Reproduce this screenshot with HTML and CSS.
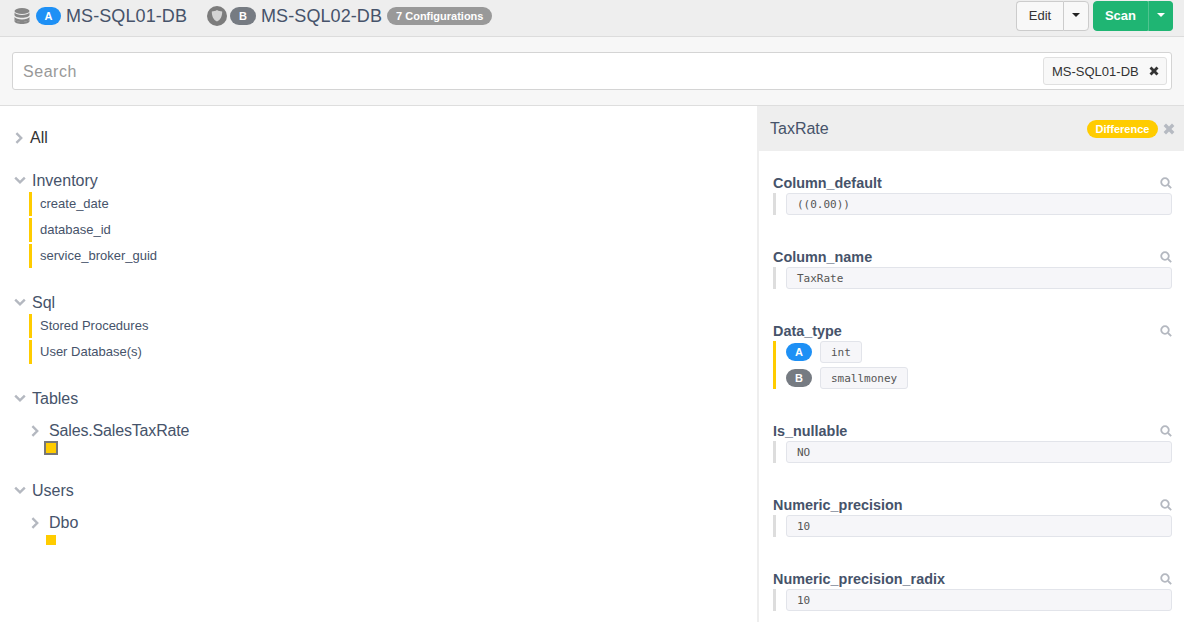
FILE: index.html
```html
<!DOCTYPE html>
<html lang="en">
<head>
<meta charset="utf-8">
<title>MS-SQL compare</title>
<link rel="stylesheet" href="styles.css">
</head>
<body>
<div class="app">
  <header class="topbar">
    <div class="hosts">
      <svg class="db-icon" viewBox="0 0 16 16"><ellipse cx="8" cy="3" rx="7.500" ry="3"/><path d="M.5 4.600v2.300c0 1.600 3.400 2.800 7.500 2.800s7.500-1.200 7.500-2.800V4.600C14.500 6.200 11.500 7 8 7S1.500 6.200.5 4.600z"/><path d="M.5 9v2.300c0 1.600 3.400 2.800 7.500 2.800s7.500-1.200 7.500-2.800V9c-1 1.600-4 2.400-7.500 2.400S1.500 10.600.5 9z"/><path d="M.5 11.500v1.700C.5 14.800 3.900 16 8 16s7.500-1.200 7.500-2.800v-1.700c-1 1.600-4 2.400-7.500 2.400s-6.500-.8-7.500-2.400z"/></svg>
      <span class="badge badge-a">A</span>
      <span class="host-name">MS-SQL01-DB</span>
      <svg class="shield-icon" viewBox="0 0 20 20"><circle cx="10" cy="10" r="10" fill="#7c7c7c"/><path d="M10 4c1.800 1 3.400 1.400 5.200 1.400 0 4.700-1.600 8.300-5.200 10.100-3.600-1.800-5.200-5.400-5.200-10.100C6.600 5.400 8.200 5 10 4z" fill="#d4d4d4"/></svg>
      <span class="badge badge-b">B</span>
      <span class="host-name">MS-SQL02-DB</span>
      <span class="pill">7 Configurations</span>
    </div>
    <div class="actions">
      <div class="btn-group">
        <button class="btn btn-edit">Edit</button>
        <button class="btn btn-edit caret-btn"><span class="caret"></span></button>
      </div>
      <div class="btn-group">
        <button class="btn btn-scan">Scan</button>
        <button class="btn btn-scan caret-btn scan-caret"><span class="caret caret-white"></span></button>
      </div>
    </div>
  </header>

  <section class="search-band">
    <div class="search-box">
      <span class="placeholder">Search</span>
      <span class="tag">MS-SQL01-DB
        <svg class="tag-x" viewBox="0 0 10 10"><path d="M2.500.5 5 3 7.500.5l2 2L7 5l2.500 2.500-2 2L5 7 2.500 9.500l-2-2L3 5 .5 2.500z"/></svg>
      </span>
    </div>
  </section>

  <main class="main">
    <nav class="tree">
      <div class="group group-all">
        <div class="group-head head-all"><svg class="chev" viewBox="0 0 10 10"><path d="M2 1l4 4-4 4"/></svg><span>All</span></div>
      </div>
      <div class="group">
        <div class="group-head"><svg class="chev chev-down" viewBox="0 0 10 10"><path d="M1 3l4 4 4-4"/></svg><span>Inventory</span></div>
        <ul class="items">
          <li>create_date</li>
          <li>database_id</li>
          <li>service_broker_guid</li>
        </ul>
      </div>
      <div class="group">
        <div class="group-head"><svg class="chev chev-down" viewBox="0 0 10 10"><path d="M1 3l4 4 4-4"/></svg><span>Sql</span></div>
        <ul class="items">
          <li>Stored Procedures</li>
          <li>User Database(s)</li>
        </ul>
      </div>
      <div class="group group-tables">
        <div class="group-head"><svg class="chev chev-down" viewBox="0 0 10 10"><path d="M1 3l4 4 4-4"/></svg><span>Tables</span></div>
        <div class="sub-head"><svg class="chev" viewBox="0 0 10 10"><path d="M2 1l4 4-4 4"/></svg><span class="sub-wide">Sales.SalesTaxRate</span></div>
        <div class="square square-selected"></div>
      </div>
      <div class="group">
        <div class="group-head"><svg class="chev chev-down" viewBox="0 0 10 10"><path d="M1 3l4 4 4-4"/></svg><span>Users</span></div>
        <div class="sub-head"><svg class="chev" viewBox="0 0 10 10"><path d="M2 1l4 4-4 4"/></svg><span>Dbo</span></div>
        <div class="square"></div>
      </div>
    </nav>

    <aside class="detail">
      <div class="detail-head">
        <span class="detail-title">TaxRate</span>
        <span class="diff-pill">Difference</span>
        <svg class="detail-x" viewBox="0 0 10 10"><path d="M2.500.5 5 3 7.500.5l2 2L7 5l2.500 2.500-2 2L5 7 2.500 9.500l-2-2L3 5 .5 2.500z"/></svg>
      </div>
      <div class="fields">
        <div class="field">
          <div class="field-label"><span>Column_default</span><svg class="lens" viewBox="0 0 12 12"><circle cx="5" cy="5" r="3.800"/><path d="M8 8l3.200 3.200"/></svg></div>
          <div class="field-body"><code class="value">((0.00))</code></div>
        </div>
        <div class="field">
          <div class="field-label"><span>Column_name</span><svg class="lens" viewBox="0 0 12 12"><circle cx="5" cy="5" r="3.800"/><path d="M8 8l3.200 3.200"/></svg></div>
          <div class="field-body"><code class="value">TaxRate</code></div>
        </div>
        <div class="field">
          <div class="field-label"><span>Data_type</span><svg class="lens" viewBox="0 0 12 12"><circle cx="5" cy="5" r="3.800"/><path d="M8 8l3.200 3.200"/></svg></div>
          <div class="field-body body-diff">
            <div class="diff-row"><span class="badge badge-a">A</span><code class="chip">int</code></div>
            <div class="diff-row"><span class="badge badge-b">B</span><code class="chip">smallmoney</code></div>
          </div>
        </div>
        <div class="field">
          <div class="field-label"><span>Is_nullable</span><svg class="lens" viewBox="0 0 12 12"><circle cx="5" cy="5" r="3.800"/><path d="M8 8l3.200 3.200"/></svg></div>
          <div class="field-body"><code class="value">NO</code></div>
        </div>
        <div class="field">
          <div class="field-label"><span>Numeric_precision</span><svg class="lens" viewBox="0 0 12 12"><circle cx="5" cy="5" r="3.800"/><path d="M8 8l3.200 3.200"/></svg></div>
          <div class="field-body"><code class="value">10</code></div>
        </div>
        <div class="field">
          <div class="field-label"><span>Numeric_precision_radix</span><svg class="lens" viewBox="0 0 12 12"><circle cx="5" cy="5" r="3.800"/><path d="M8 8l3.200 3.200"/></svg></div>
          <div class="field-body"><code class="value">10</code></div>
        </div>
      </div>
    </aside>
  </main>
</div>
</body>
</html>
```

FILE: styles.css
```css
* { box-sizing: border-box; }
html, body { margin: 0; height: 100%; overflow: hidden; }
body { font-family: "Liberation Sans", Arial, sans-serif; color: #46536a; background: #fff; }
.app { height: 622px; display: flex; flex-direction: column; overflow: hidden; }

.topbar { height: 37px; flex: none; display: flex; justify-content: space-between; background: #eeeeee; border-bottom: 1px solid #dcdcdc; padding: 1px 11px 0 14px; }
.hosts { display: flex; align-items: center; height: 30px; }
.db-icon { width: 16px; height: 16px; fill: #868686; margin-right: 6px; }
.badge { display: inline-flex; align-items: center; justify-content: center; width: 25px; height: 18px; border-radius: 9px; color: #fff; font-size: 11px; font-weight: 700; flex: none; }
.badge-a { background: #1e90f5; }
.badge-b { background: #767b82; }
.host-name { font-size: 18px; letter-spacing: .09px; line-height: 30px; margin-left: 5px; color: #46536a; }
.shield-icon { width: 20px; height: 20px; margin-left: 20px; margin-right: 3px; }
.shield-icon + .badge { width: 26px; }
.pill { height: 18px; border-radius: 9px; background: #999; color: #fff; font-size: 11px; font-weight: 700; line-height: 18px; padding: 0 9px; margin-left: 5px; width: 105px; white-space: nowrap; }

.actions { display: flex; gap: 4px; }
.btn-group { display: flex; height: 30px; }
.btn { font-family: inherit; font-size: 13px; margin: 0; padding: 0 0 2px; height: 30px; border-radius: 4px; display: flex; align-items: center; justify-content: center; }
.btn-edit { width: 47px; background: #f8f8f8; border: 1px solid #ccc; border-right: 0; color: #333; border-radius: 4px 0 0 4px; }
.btn-edit.caret-btn { width: 26px; border: 1px solid #ccc; border-radius: 0 4px 4px 0; }
.btn-scan { width: 55px; background: #1fb573; border: 1px solid #1fb573; color: #fff; font-weight: 700; border-radius: 4px 0 0 4px; }
.btn-scan.scan-caret { width: 25px; border-left: 1px solid #4fc48f; border-radius: 0 4px 4px 0; }
.caret { width: 0; height: 0; border-left: 4px solid transparent; border-right: 4px solid transparent; border-top: 4px solid #222; }
.caret-white { border-top-color: #fff; }

.search-band { height: 69px; flex: none; background: #f7f7f7; border-bottom: 1px solid #dedede; padding: 15px 12px 0; }
.search-box { height: 38px; background: #fff; border: 1px solid #d4d4d4; border-radius: 3px; display: flex; align-items: center; justify-content: space-between; padding: 0 4px 0 10px; }
.placeholder { font-size: 16px; letter-spacing: .55px; color: #999; padding-top: 2px; }
.tag { width: 124px; height: 28px; background: #f8f8f8; border: 1px solid #e0e0e0; border-radius: 3px; font-size: 13px; color: #333; display: flex; align-items: center; justify-content: space-between; padding: 0 7px 0 8px; }
.tag-x { width: 10px; height: 10px; fill: #333; }

.main { flex: 1; min-height: 0; display: flex; }
.tree { width: 757px; flex: none; padding: 22px 0 0 14px; }
.group { margin-bottom: 25px; }
.group-all { margin-bottom: 23px; }
.group-tables { margin-bottom: 26px; }
.group-head { display: flex; align-items: center; gap: 6px; font-size: 16px; line-height: 20px; }
.head-all { gap: 4px; color: #333; }
.chev { width: 12px; height: 12px; fill: none; stroke: #b4b8c0; stroke-width: 2; flex: none; }
.chev-down { margin-top: -3px; }
.items { list-style: none; margin: 1px 0 0 15px; padding: 0; }
.items li { height: 24px; margin-bottom: 2px; border-left: 3px solid #ffcc00; padding-left: 8px; font-size: 13px; line-height: 24px; }
.items li:last-child { margin-bottom: 0; }
.sub-head { display: flex; align-items: center; gap: 7px; margin: 12px 0 0 16px; font-size: 16px; line-height: 20px; }
.sub-wide { letter-spacing: -.16px; }
.square { width: 10px; height: 10px; background: #ffcc00; margin: 2px 0 0 32px; }
.square-selected { width: 14px; height: 14px; border: 2px solid #777; margin: 0 0 0 30px; }

.detail { flex: 1; min-width: 0; border-left: 2px solid #eeeeee; }
.detail-head { height: 45px; background: #eeeeee; margin-left: -2px; display: flex; align-items: center; padding: 0 9px 0 13px; }
.detail-title { font-size: 16px; flex: 1; }
.diff-pill { width: 71px; height: 18px; border-radius: 9px; background: #ffcc00; color: #fff; font-size: 11px; font-weight: 700; line-height: 18px; text-align: center; }
.detail-x { width: 12px; height: 12px; fill: #b6bac2; margin-left: 5px; }

.fields { padding: 24px 12px 0 14px; }
.field { margin-bottom: 34px; }
.field-label { display: flex; justify-content: space-between; align-items: center; height: 18px; padding-bottom: 2px; font-size: 14.400px; font-weight: 700; }
.lens { width: 12px; height: 12px; fill: none; stroke: #b4b8c0; stroke-width: 1.800; }
.field-body { border-left: 3px solid #dddddd; padding-left: 10px; }
.value, .chip { font-family: "DejaVu Sans Mono", "Liberation Mono", monospace; font-size: 11px; color: #555; background: #f6f6f9; border: 1px solid #e2e4ea; border-radius: 3px; height: 22px; line-height: 22px; display: block; }
.value { padding-left: 10px; }
.body-diff { border-left-color: #ffcc00; display: flex; flex-direction: column; gap: 4px; }
.diff-row { display: flex; align-items: center; gap: 8px; height: 22px; }
.body-diff .badge { width: 26px; }
.chip { padding: 0 10px; }
```
